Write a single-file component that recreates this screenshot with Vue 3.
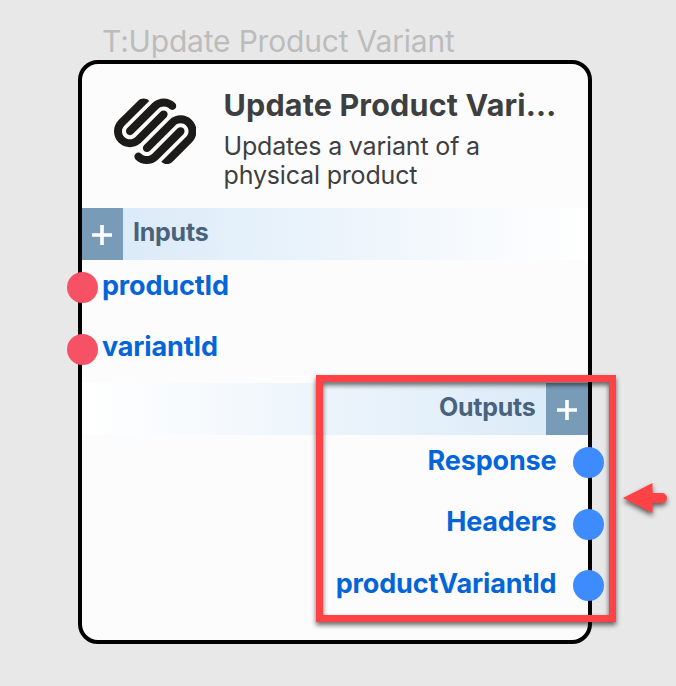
<script setup>
const inputs = ['productId', 'variantId']
const outputs = ['Response', 'Headers', 'productVariantId']
</script>

<template>
  <main class="canvas">
    <div class="step-name">T:Update Product Variant</div>
    <article class="card">
      <header class="head">
        <svg class="logo" viewBox="0 0 24 24" aria-hidden="true">
          <path d="M22.655 8.719c-1.802-1.801-4.726-1.801-6.564 0l-7.351 7.35c-.45.45-.45 1.2 0 1.65.45.449 1.2.449 1.65 0l7.351-7.351c.899-.899 2.362-.899 3.264 0 .9.9.9 2.364 0 3.264l-7.239 7.239c.9.899 2.362.899 3.263 0l5.589-5.589c1.836-1.838 1.836-4.763.037-6.563zm-2.475 2.437c-.451-.45-1.201-.45-1.65 0l-7.354 7.389c-.9.899-2.361.899-3.262 0-.45-.45-1.2-.45-1.65 0s-.45 1.2 0 1.649c1.801 1.801 4.726 1.801 6.564 0l7.351-7.35c.449-.487.449-1.239.001-1.688zm-2.439-7.35c-1.801-1.801-4.726-1.801-6.564 0l-7.351 7.351c-.45.449-.45 1.199 0 1.649s1.2.45 1.65 0l7.395-7.351c.9-.899 2.371-.899 3.27 0 .451.45 1.201.45 1.65 0 .421-.487.421-1.199-.05-1.649zm-2.475 2.474c-.45-.449-1.2-.449-1.65 0l-7.351 7.389c-.899.9-2.363.9-3.265 0-.9-.899-.9-2.363 0-3.264l7.239-7.239c-.9-.9-2.362-.9-3.263 0L1.35 8.719c-1.8 1.8-1.8 4.725 0 6.563 1.801 1.801 4.725 1.801 6.564 0l7.35-7.351c.451-.488.451-1.238.002-1.651z" />
        </svg>
        <div class="titles">
          <h1>Update Product Vari…</h1>
          <p>Updates a variant of a physical product</p>
        </div>
      </header>

      <div class="bar">
        <button class="add" aria-label="+">
          <svg viewBox="0 0 20 20"><path d="M10 0v20M0 10h20" /></svg>
        </button>
        <span class="bar-label">Inputs</span>
      </div>
      <ul class="ports">
        <li v-for="name in inputs" :key="name">
          <i class="dot"></i><span>{{ name }}</span>
        </li>
      </ul>

      <div class="bar out">
        <button class="add" aria-label="+">
          <svg viewBox="0 0 20 20"><path d="M10 0v20M0 10h20" /></svg>
        </button>
        <span class="bar-label">Outputs</span>
      </div>
      <ul class="ports out">
        <li v-for="name in outputs" :key="name">
          <i class="dot"></i><span>{{ name }}</span>
        </li>
      </ul>
    </article>

    <div class="highlight"></div>
    <svg class="arrow" viewBox="0 0 44 30" aria-hidden="true">
      <path d="M0 15 29.5 0v10H39a5 5 0 0 1 0 10H29.5v10z" />
    </svg>
  </main>
</template>

<style>
body {
  background: #e8e8e8;
}
</style>

<style scoped>
.canvas {
  position: relative;
  box-sizing: border-box;
  width: 676px;
  height: 686px;
  padding: 23px 0 0 78px;
  overflow: hidden;
  background: #e8e8e8;
  font-family: Inter, sans-serif;
}
.step-name {
  height: 37px;
  padding-left: 24px;
  font-size: 30px;
  line-height: 37px;
  letter-spacing: -0.19px;
  white-space: nowrap;
  color: #bcbcbc;
}
.card {
  box-sizing: border-box;
  width: 514px;
  height: 584px;
  border: 4px solid #000;
  border-radius: 20px;
  background: #fcfcfc;
}
.head {
  display: flex;
  box-sizing: border-box;
  height: 144px;
  padding: 22px 0 0 31.5px;
}
.logo {
  width: 82.5px;
  height: 82.5px;
  margin-top: 3.5px;
  fill: #1c1b19;
}
.titles {
  margin-left: 27.5px;
  color: #3e3f40;
}
h1 {
  margin: 0;
  font-size: 30.5px;
  line-height: 38px;
  font-weight: 700;
  letter-spacing: 0.17px;
  white-space: nowrap;
}
p {
  width: 300px;
  margin: 8px 0 0;
  font-size: 25px;
  line-height: 29px;
  letter-spacing: -0.17px;
}
.bar {
  display: flex;
  height: 51.5px;
  background: linear-gradient(90deg, #d8e9f7, #fff);
}
.bar.out {
  flex-direction: row-reverse;
  background: linear-gradient(270deg, #d8e9f7, #fff);
}
.add {
  display: flex;
  align-items: center;
  justify-content: center;
  width: 41px;
  padding: 3px 1px 0 0;
  border: 0;
  background: #789bb7;
}
.out .add {
  width: 42px;
  padding-right: 1px;
}
.add svg {
  width: 20px;
  height: 20px;
  stroke: #fff;
  stroke-width: 3.6;
}
.bar-label {
  margin: 0 10px;
  font-size: 25px;
  line-height: 48px;
  font-weight: 700;
  letter-spacing: -0.25px;
  color: #4a627c;
}
.out .bar-label {
  margin-right: 10.5px;
}
.ports {
  height: 123.5px;
  margin: 0;
  padding: 0;
  list-style: none;
}
.ports li {
  display: flex;
  align-items: center;
  height: 61.75px;
  margin-left: -15px;
  padding-bottom: 6px;
  box-sizing: border-box;
  font-size: 27px;
  font-weight: 700;
  letter-spacing: -0.15px;
  color: #0465d8;
}
.ports span {
  margin: -4.7px 0 0 4px;
}
.dot {
  width: 31px;
  height: 31px;
  border-radius: 50%;
  background: #f65164;
}
.ports.out li {
  flex-direction: row-reverse;
  margin: 0 -16px 0 0;
}
.ports.out span {
  margin: -4.7px 16.5px 0 0;
}
.ports.out .dot {
  background: #3d8bfc;
}
.highlight {
  position: absolute;
  left: 316px;
  top: 375px;
  box-sizing: border-box;
  width: 300px;
  height: 247px;
  border: 7px solid #ff4245;
  filter: drop-shadow(0 3px 2.5px rgba(0, 0, 0, 0.6));
}
.arrow {
  position: absolute;
  left: 623px;
  top: 483px;
  width: 44px;
  height: 30px;
  overflow: visible;
  fill: #ff4245;
  filter: drop-shadow(0 3px 2.5px rgba(0, 0, 0, 0.6));
}
</style>
